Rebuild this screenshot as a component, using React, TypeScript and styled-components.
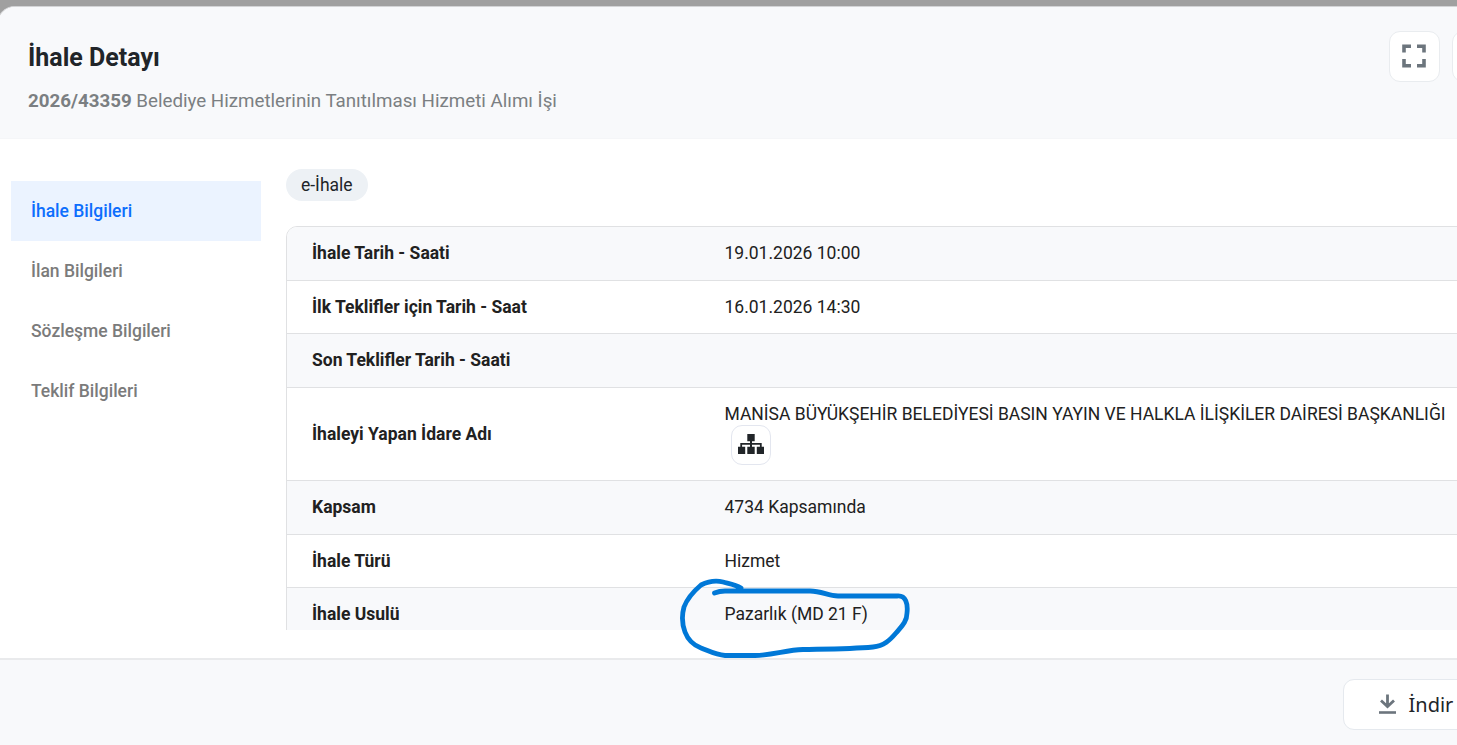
import React from 'react';
import styled, { createGlobalStyle } from 'styled-components';

const GlobalStyle = createGlobalStyle`
  * { box-sizing: border-box; }
  body { margin: 0; background: #a0a0a0; font-family: Roboto, "Liberation Sans", sans-serif; color: #212529; overflow: hidden; }
`;

const Backdrop = styled.div`
  height: 745px;
  width: 1457px;
  padding-top: 6px;
  overflow: hidden;
  background: #a0a0a0;
`;

const Modal = styled.div`
  height: 739px;
  width: 1660px;
  margin-left: -3px;
  display: flex;
  flex-direction: column;
  background: #fff;
  border: 1px solid #d3d4d6;
  border-radius: 18px 18px 0 0;
  border-bottom: 0;
  overflow: hidden;
`;

const Header = styled.header`
  flex: 0 0 132px;
  display: flex;
  align-items: flex-start;
  background: #f8f9fb;
  border-bottom: 1px solid #f5f6f8;
  padding: 24px 0 0 30px;
`;

const Titles = styled.div`
  width: 1361px;
  padding-top: 12px;
`;

const Title = styled.h1`
  margin: 0;
  font-size: 25px;
  line-height: 30px;
  font-weight: 700;
  white-space: nowrap;
`;

const Subtitle = styled.p`
  margin: 16px 0 0;
  font-size: 18.75px;
  line-height: 24px;
  letter-spacing: -0.01px;
  color: #7b7f82;
  white-space: nowrap;
`;

const IconButton = styled.button`
  width: 51px;
  height: 51px;
  flex: none;
  margin-right: 12px;
  padding: 0 1px 1px 0;
  display: flex;
  align-items: center;
  justify-content: center;
  background: #fff;
  border: 1px solid #e9ecef;
  border-radius: 11px;
`;

const Body = styled.main`
  flex: 0 0 519px;
  display: flex;
  padding-left: 13px;
`;

const Nav = styled.nav`
  width: 250px;
  flex: none;
  margin-right: 25px;
  padding-top: 42px;
`;

const NavItem = styled.div<{ $active?: boolean }>`
  height: 60px;
  padding: 0 20px;
  font-size: 17.5px;
  font-weight: 500;
  line-height: 60px;
  color: ${(p) => (p.$active ? '#0d6efd' : '#7b7b7b')};
  background: ${(p) => (p.$active ? '#ebf3ff' : 'transparent')};
`;

const Content = styled.section`
  width: 1340px;
  height: 491px;
  padding-top: 30px;
  overflow: hidden;
`;

const Badge = styled.span`
  display: flex;
  align-items: center;
  width: 82px;
  height: 32px;
  padding-left: 15px;
  border-radius: 16px;
  background: #edf1f5;
  font-size: 17.5px;
`;

const Table = styled.div`
  margin-top: 25px;
  border: 1px solid #e0e1e3;
  border-radius: 11px;
  overflow: hidden;
`;

const Row = styled.div<{ $height: number }>`
  height: ${(p) => p.$height}px;
  display: flex;
  align-items: center;
  padding: 0 0 1px 25px;
  font-size: 17.5px;
  line-height: 26px;
  color: #212121;
  border-bottom: 1px solid #e0e1e3;
  &:nth-child(odd) { background: #f8f9fb; }
`;

const Label = styled.div`
  width: 412.5px;
  flex: none;
  font-weight: 700;
`;

const Value = styled.div<{ $stacked?: boolean }>`
  white-space: nowrap;
  padding-bottom: ${(p) => (p.$stacked ? 2 : 0)}px;
`;

const OrgButton = styled(IconButton)`
  width: 40px;
  height: 40px;
  margin: -2px 0 0 6px;
  padding: 0 0 2px;
  border-color: #e3e6ef;
`;

const Footer = styled.footer`
  flex: 1;
  display: flex;
  align-items: flex-start;
  border-top: 2px solid #e9eaec;
  background: #f8f9fb;
  padding: 19px 0 0 1345px;
`;

const DownloadButton = styled.button`
  width: 170px;
  height: 51px;
  display: flex;
  align-items: center;
  padding: 0 0 0 31px;
  gap: 9.5px;
  background: #fff;
  border: 1px solid #e5e9ee;
  border-radius: 11px;
  color: #212529;
  font: 20px "Noto Sans", sans-serif;
`;

const Annotation = styled.svg`
  position: absolute;
  left: 670px;
  top: 570px;
  pointer-events: none;
`;

const rows: { label: string; value: string; height: number; org?: boolean }[] = [
  { label: 'İhale Tarih - Saati', value: '19.01.2026 10:00', height: 54 },
  { label: 'İlk Teklifler için Tarih - Saat', value: '16.01.2026 14:30', height: 53 },
  { label: 'Son Teklifler Tarih - Saati', value: '', height: 54 },
  { label: 'İhaleyi Yapan İdare Adı', value: 'MANİSA BÜYÜKŞEHİR BELEDİYESİ BASIN YAYIN VE HALKLA İLİŞKİLER DAİRESİ BAŞKANLIĞI', height: 93, org: true },
  { label: 'Kapsam', value: '4734 Kapsamında', height: 54 },
  { label: 'İhale Türü', value: 'Hizmet', height: 53 },
  { label: 'İhale Usulü', value: 'Pazarlık (MD 21 F)', height: 54 },
];

const navItems = ['İhale Bilgileri', 'İlan Bilgileri', 'Sözleşme Bilgileri', 'Teklif Bilgileri'];

const FullscreenIcon = () => (
  <svg width="24" height="24" viewBox="0 0 24 24" fill="none" stroke="#6c757d" strokeWidth="3.6">
    <path d="M2 8.5V2.3H9M15 2.3H22V8.5M2 15V21.7H9M15 21.7H22V15" />
  </svg>
);

const OrgIcon = () => (
  <svg width="26" height="20" viewBox="0 0 26 20" fill="#212529">
    <path d="M9.3 0H16.7V7.2H14V9H23.7V12.8H26V20H18.8V12.8H21.9V10.7H14V12.8H16.7V20H9.3V12.8H12V10.7H4.1V12.8H7.2V20H0V12.8H2.3V9H12V7.2H9.3Z" />
  </svg>
);

const DownloadIcon = () => (
  <svg width="24" height="24" viewBox="0 0 24 24" fill="none" stroke="#6c757d">
    <path d="M12.5 1.5V13.5M6 7.5L12.5 13.5L19 7.5" strokeWidth="2.8" />
    <path d="M4 19.5H21" strokeWidth="2.6" />
  </svg>
);

export default function App() {
  return (
    <Backdrop>
      <GlobalStyle />
      <Modal>
        <Header>
          <Titles>
            <Title>İhale Detayı</Title>
            <Subtitle><b>2026/43359</b> Belediye Hizmetlerinin Tanıtılması Hizmeti Alımı İşi</Subtitle>
          </Titles>
          <IconButton><FullscreenIcon /></IconButton>
          <IconButton />
        </Header>
        <Body>
          <Nav>
            {navItems.map((item, i) => <NavItem key={item} $active={i === 0}>{item}</NavItem>)}
          </Nav>
          <Content>
            <Badge>e-İhale</Badge>
            <Table>
              {rows.map((row) => (
                <Row key={row.label} $height={row.height}>
                  <Label>{row.label}</Label>
                  <Value $stacked={row.org}>
                    {row.value}
                    {row.org && <OrgButton><OrgIcon /></OrgButton>}
                  </Value>
                </Row>
              ))}
            </Table>
          </Content>
        </Body>
        <Footer>
          <DownloadButton><DownloadIcon />İndir</DownloadButton>
        </Footer>
      </Modal>
      <Annotation width="250" height="100" viewBox="0 0 250 100" fill="none" stroke="#0078d7" strokeWidth="4.8" strokeLinecap="round" strokeLinejoin="round">
        <path d="M71 18C65 14.5 58 13.5 53 12C47 10.5 38 11.500 31 15C24 21 17 29 14 37C11.500 46 12 54 15 62C18 70 23 75 31 78C39 81 46 85 55 85.500H85C104 85 116 80 133 79.500C159 79 181 79 203 77C214 76 220 70 226 63C231 57 237 52 237 43C238 34 236 25 227 26H168C158 26 152 21 140 21H55C51 21 47 22 44.500 23" />
      </Annotation>
    </Backdrop>
  );
}
